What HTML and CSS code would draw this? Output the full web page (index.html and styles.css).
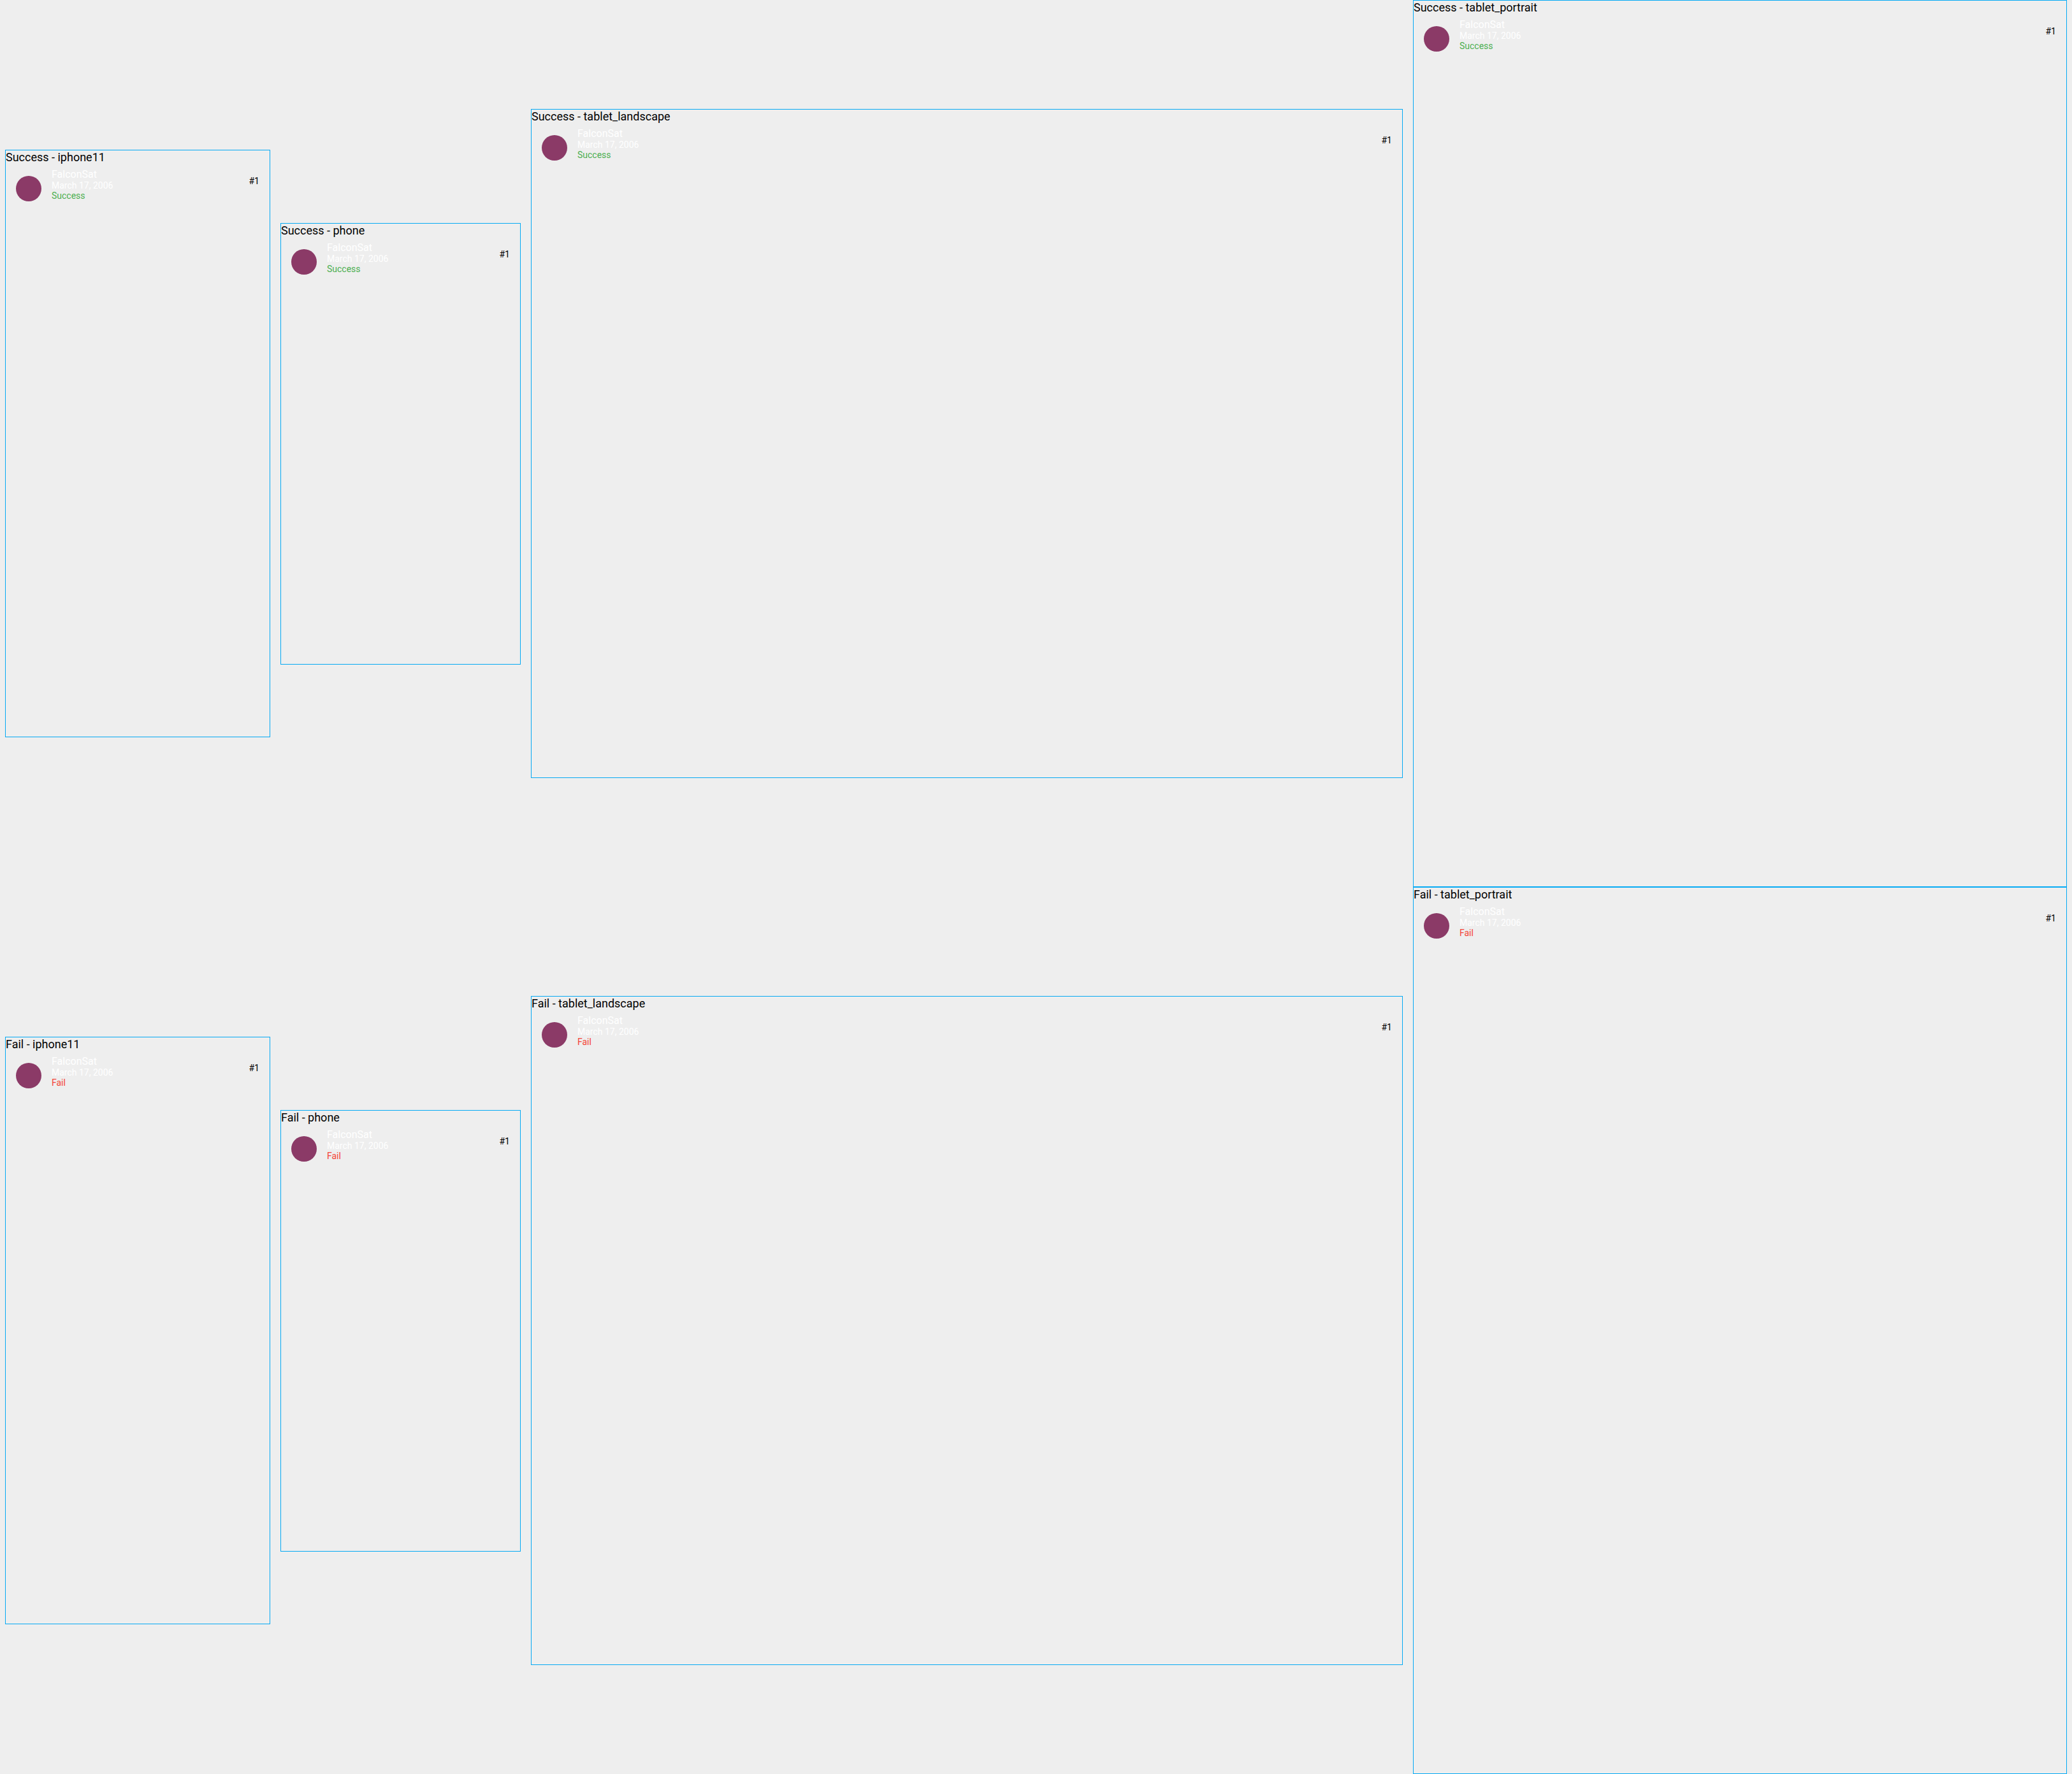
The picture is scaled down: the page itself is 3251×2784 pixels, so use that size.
FILE: index.html
```html
<!DOCTYPE html>
<html lang="en">
<head>
<meta charset="utf-8">
<meta name="viewport" content="width=device-width, initial-scale=1">
<title>Launch tile previews</title>
<link rel="stylesheet" href="styles.css">
</head>
<body>
<main>
  <section class="scenario" aria-label="Success">
    <article class="device iphone11">
      <h2 class="title">Success - iphone11</h2>
      <div class="tile">
        <span class="avatar"></span>
        <div class="details"><p class="name">FalconSat</p><p class="date">March 17, 2006</p><p class="success">Success</p></div>
        <span class="number">#1</span>
      </div>
    </article>
    <article class="device phone">
      <h2 class="title">Success - phone</h2>
      <div class="tile">
        <span class="avatar"></span>
        <div class="details"><p class="name">FalconSat</p><p class="date">March 17, 2006</p><p class="success">Success</p></div>
        <span class="number">#1</span>
      </div>
    </article>
    <article class="device landscape">
      <h2 class="title">Success - tablet_landscape</h2>
      <div class="tile">
        <span class="avatar"></span>
        <div class="details"><p class="name">FalconSat</p><p class="date">March 17, 2006</p><p class="success">Success</p></div>
        <span class="number">#1</span>
      </div>
    </article>
    <article class="device portrait">
      <h2 class="title">Success - tablet_portrait</h2>
      <div class="tile">
        <span class="avatar"></span>
        <div class="details"><p class="name">FalconSat</p><p class="date">March 17, 2006</p><p class="success">Success</p></div>
        <span class="number">#1</span>
      </div>
    </article>
  </section>
  <section class="scenario" aria-label="Fail">
    <article class="device iphone11">
      <h2 class="title">Fail - iphone11</h2>
      <div class="tile">
        <span class="avatar"></span>
        <div class="details"><p class="name">FalconSat</p><p class="date">March 17, 2006</p><p class="fail">Fail</p></div>
        <span class="number">#1</span>
      </div>
    </article>
    <article class="device phone">
      <h2 class="title">Fail - phone</h2>
      <div class="tile">
        <span class="avatar"></span>
        <div class="details"><p class="name">FalconSat</p><p class="date">March 17, 2006</p><p class="fail">Fail</p></div>
        <span class="number">#1</span>
      </div>
    </article>
    <article class="device landscape">
      <h2 class="title">Fail - tablet_landscape</h2>
      <div class="tile">
        <span class="avatar"></span>
        <div class="details"><p class="name">FalconSat</p><p class="date">March 17, 2006</p><p class="fail">Fail</p></div>
        <span class="number">#1</span>
      </div>
    </article>
    <article class="device portrait">
      <h2 class="title">Fail - tablet_portrait</h2>
      <div class="tile">
        <span class="avatar"></span>
        <div class="details"><p class="name">FalconSat</p><p class="date">March 17, 2006</p><p class="fail">Fail</p></div>
        <span class="number">#1</span>
      </div>
    </article>
  </section>
</main>
</body>
</html>
```
FILE: styles.css
```css
* {
  box-sizing: border-box;
}

body,
h2,
p {
  margin: 0;
}

body {
  background: #eeeeee;
  color: #000000;
  font: 14px/16px Roboto, sans-serif;
}

/* Columns keep the relative widths of the devices. */
.scenario {
  display: grid;
  grid-template-columns: minmax(0, 416fr) minmax(0, 377fr) minmax(0, 1368fr) minmax(0, 1026fr);
  align-items: center;
  gap: 16px;
  padding: 0 8px;
}

.device {
  border: 1px solid #03a9f4;
}

.iphone11 {
  aspect-ratio: 416 / 922;
}

.phone {
  aspect-ratio: 377 / 693;
}

.landscape {
  aspect-ratio: 1368 / 1050;
}

.portrait {
  aspect-ratio: 1026 / 1392;
}

.title {
  padding-bottom: 3px;
  font-size: 18px;
  font-weight: 400;
  line-height: 21px;
}

.tile {
  display: flex;
  align-items: flex-start;
  gap: 16px;
  padding: 4px 16px;
}

.avatar {
  flex: none;
  width: 40px;
  height: 40px;
  margin-top: 12px;
  border-radius: 50%;
  background: #8b3a67;
}

.details {
  flex: 1;
}

.name {
  color: #ffffff;
  font-size: 16px;
  line-height: 19px;
}

.date {
  color: #ffffff;
}

.success {
  color: #4caf50;
}

.fail {
  color: #f44336;
}

.number {
  margin-top: 12px;
}

@media (max-width: 1600px) {
  .scenario {
    grid-template-columns: repeat(auto-fit, minmax(280px, 1fr));
    padding: 8px;
  }
}
```
